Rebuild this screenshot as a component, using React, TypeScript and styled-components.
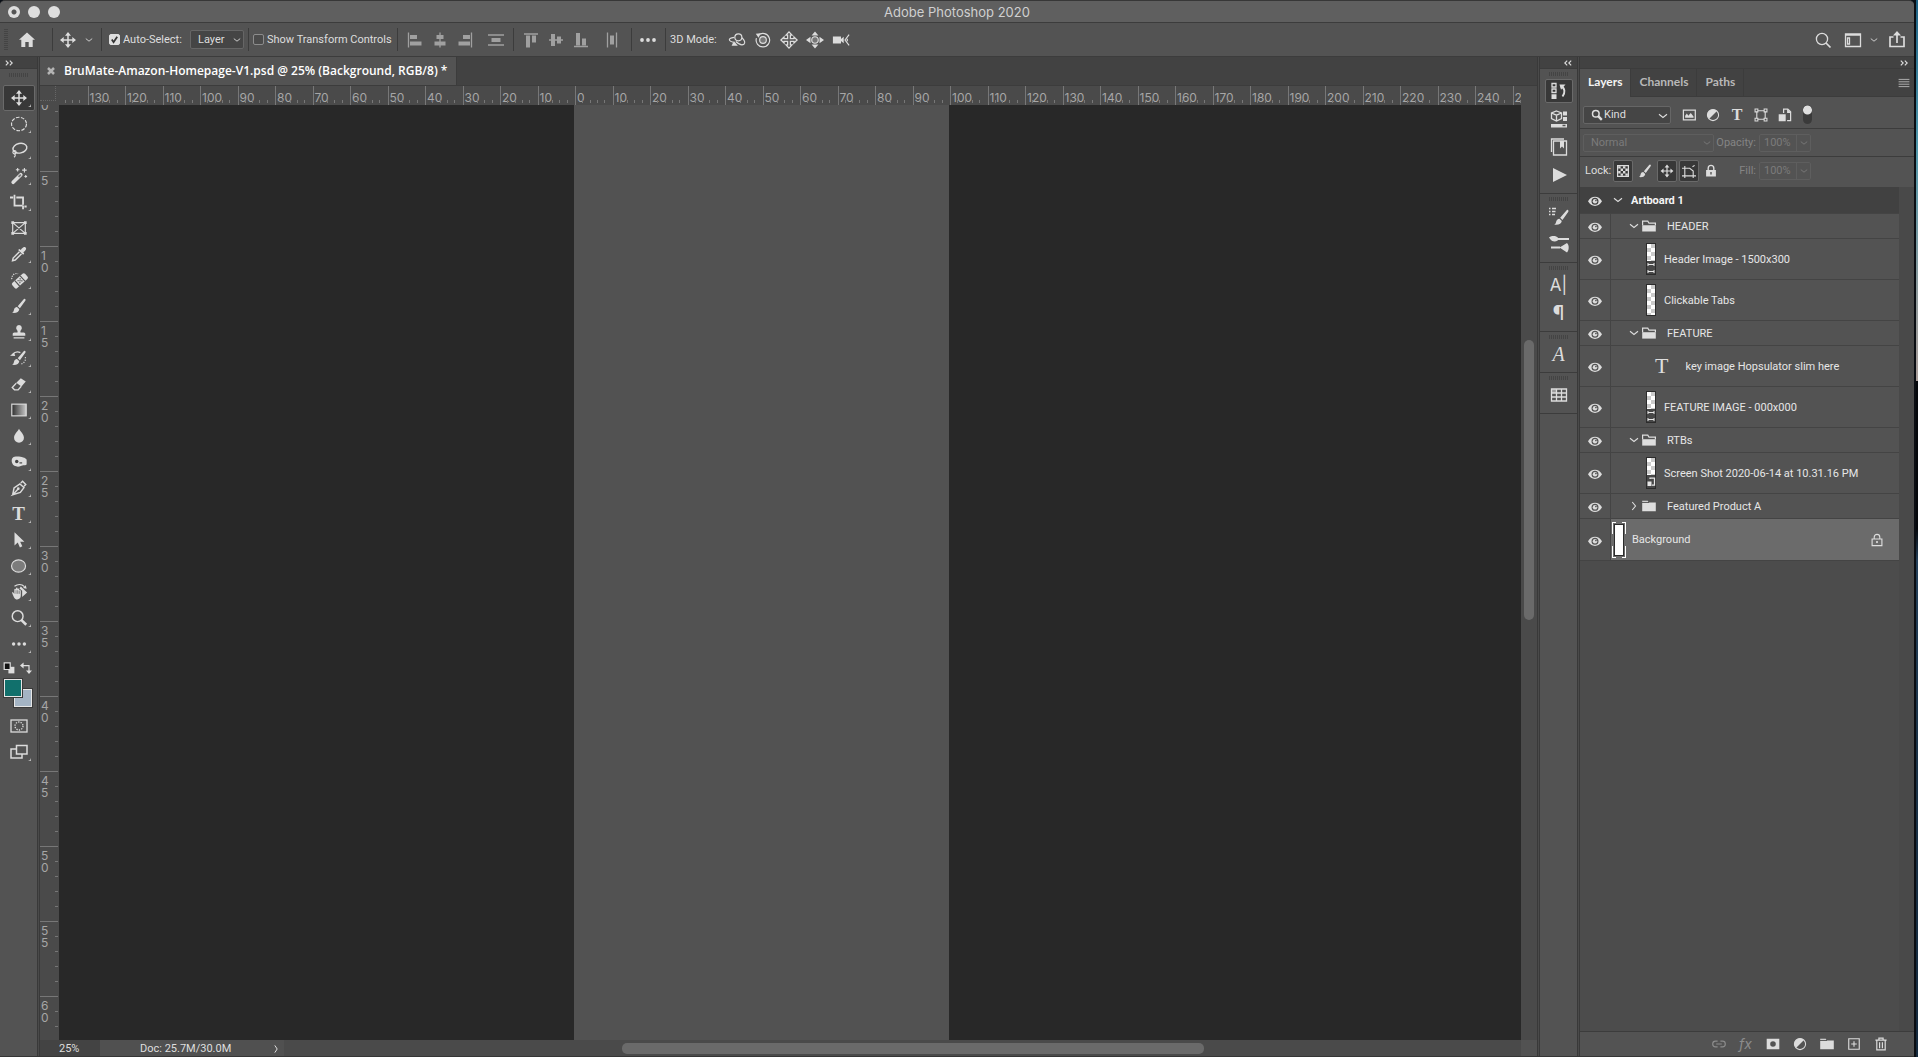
import React from "react";
import styled, { createGlobalStyle, css } from "styled-components";

const c = {
  line: "#3c3c3c",
  panel: "#535353",
  dark: "#424242",
  mid: "#4a4a4a",
  canvas: "#282828",
  text: "#dedede",
  dim: "#7b7b7b",
  icon: "#dcdcdc",
};

const sans = `Roboto, "Liberation Sans", sans-serif`;
const wide = `Inter, Roboto, sans-serif`;
const humanist = `Lato, "Open Sans", sans-serif`;

const Global = createGlobalStyle`
  * { box-sizing: border-box; }
  html, body { margin: 0; height: 100%; background: #10202e; }
  body { font: 11px/14px ${sans}; color: ${c.text}; overflow: hidden; }
  button, input, select { font: inherit; color: inherit; margin: 0; }
  h1, ul { margin: 0; padding: 0; }
`;

/* ---------- shared parts ---------- */

const Desktop = styled.div`
  display: grid;
  grid-template-columns: minmax(0, 1fr) 4px;
  height: 100vh;
  background: #0a0f16;
`;

const Wallpaper = styled.div`
  border-left: 2px solid #0a0d12;
  background: linear-gradient(#1d6285 0%, #4f97ab 14%, #8f9a9c 28%, #a89c98 36%, #05080c 36%, #05080c 50%, #24405a 53%, #1b3348 70%, #14293d 100%);
`;

const Window = styled.div`
  display: flex;
  flex-direction: column;
  min-width: 0;
  height: 100vh;
  border-top: 1px solid #373737;
  border-bottom: 1px solid #353535;
  border-radius: 5px 5px 0 0;
  overflow: hidden;
  background: ${c.panel};
`;

const IconButton = styled.button<{ $w?: number; $h?: number; $active?: boolean }>`
  position: relative;
  display: flex;
  flex: none;
  align-items: center;
  justify-content: center;
  width: ${(p) => p.$w ?? 24}px;
  height: ${(p) => p.$h ?? 24}px;
  padding: 0;
  border: 1px solid ${(p) => (p.$active ? "#6a6a6a" : "transparent")};
  border-radius: 2px;
  background: ${(p) => (p.$active ? "#383838" : "none")};
  color: ${c.icon};
`;

const Svg = styled.svg<{ $size: number }>`
  display: block;
  flex: none;
  width: ${(p) => p.$size}px;
  height: ${(p) => p.$size}px;
  overflow: visible;
`;

const Corner = styled.i`
  position: absolute;
  right: 3px;
  bottom: 3px;
  border: 1px solid currentColor;
  border-width: 2px 1px 1px 2px;
  border-color: transparent #bbb #bbb transparent;
`;

const Glyph = styled.span<{ $size: number; $bold?: boolean; $italic?: boolean; $sans?: boolean }>`
  font-family: ${(p) => (p.$sans ? wide : `"Liberation Serif", serif`)};
  font-size: ${(p) => p.$size}px;
  line-height: 20px;
  font-weight: ${(p) => (p.$bold ? 700 : 400)};
  font-style: ${(p) => (p.$italic ? "italic" : "normal")};
`;

const GripH = styled.div`
  height: 4px;
  width: 20px;
  background: repeating-linear-gradient(90deg, #444 0 1px, transparent 1px 2px);
`;

function Icon({ size = 20, children }: { size?: number; children: React.ReactNode }) {
  return (
    <Svg $size={size} viewBox="0 0 20 20" fill="none" stroke="currentColor" strokeWidth="1.3" aria-hidden="true">
      {children}
    </Svg>
  );
}

const solid = { fill: "currentColor", stroke: "none" };

/* ---------- icons ---------- */

const MoveIcon = ({ size = 20 }: { size?: number }) => (
  <Icon size={size}>
    <path d="M10 4v12M4 10h12" strokeWidth="1.500" />
    <path {...solid} d="M10 2l3 3.700H7zM10 18l3-3.700H7zM2 10l3.700-3v6zM18 10l-3.700-3v6z" />
  </Icon>
);

const Chevron = ({ size = 10 }: { size?: number }) => (
  <Icon size={size}>
    <path strokeWidth="2.200" d="M2 6.500l8 6.500 8-6.500" />
  </Icon>
);

const Brush = () => (
  <>
    <path {...solid} d="M16.800 2.200c.8.6.6 1.300.2 2L11 12.600 8.600 10.300l6.600-7.700c.5-.6 1-.9 1.600-.4z" />
    <path {...solid} d="M7.800 11.200l2.500 2.400c-.2 3-3.500 4.600-8 3.900 1.900-.9 1.800-2.200 2.300-3.800.5-1.500 1.700-2.600 3.200-2.500z" />
  </>
);

const HomeIcon = () => (
  <Icon>
    <path {...solid} d="M10 2.500l8 7.300h-2.300V17h-4v-5H8.300v5h-4V9.800H2z" />
  </Icon>
);

const SearchIcon = () => (
  <Icon>
    <circle cx="9" cy="9" r="5.600" />
    <path d="M13 13l4.500 4.500" strokeWidth="1.700" />
  </Icon>
);

const AlignIcon = ({ kind }: { kind: number }) => (
  <Icon>
    {kind === 0 && <><path d="M3.500 2.500v15" /><path {...solid} d="M5 5h7v4H5zM5 11.500h11.500v4H5z" /></>}
    {kind === 1 && <><path d="M10 2.500v15" /><path {...solid} d="M6.500 5h7v4h-7zM4.500 11.500h11v4h-11z" /></>}
    {kind === 2 && <><path d="M16.500 2.500v15" /><path {...solid} d="M8 5h7v4H8zM3.500 11.500H15v4H3.500z" /></>}
    {kind === 3 && <><path d="M2 5h16M2 15h16" /><path {...solid} d="M5.500 8h9v4h-9z" /></>}
    {kind === 4 && <><path d="M3 4h14" /><path {...solid} d="M5 5.500h4v12H5zM11 5.500h4v7h-4z" /></>}
    {kind === 5 && <><path d="M3 10h14" /><path {...solid} d="M5 4h4v12H5zM11 6.500h4v7h-4z" /></>}
    {kind === 6 && <><path d="M3 16.500h14" /><path {...solid} d="M5 3h4v12.500H5zM11 8.500h4v7h-4z" /></>}
    {kind === 7 && <><path d="M5.500 2.500v15M14.500 2.500v15" /><path {...solid} d="M8 5.500h4v9H8z" /></>}
  </Icon>
);

const DotsIcon = () => (
  <Icon>
    <g {...solid}>
      <circle cx="4" cy="10" r="1.900" /><circle cx="10" cy="10" r="1.900" /><circle cx="16" cy="10" r="1.900" />
    </g>
  </Icon>
);

const modes: { name: string; art: React.ReactNode }[] = [
  {
    name: "Orbit the 3D camera",
    art: <><circle cx="11.500" cy="7" r="3.900" /><path d="M7 7C2.500 7.500.8 9 1.800 10.500c.6 1 2.200 1.500 4 2M15.500 7.500c3 2.500 4 6 2.200 7.200-2 1.300-6-.2-9-3" /><path {...solid} d="M4 16.500h7L6.500 11z" /></>,
  },
  {
    name: "Roll the 3D camera",
    art: <><circle cx="10" cy="10" r="3.700" fill="#777" /><path d="M5 4.500a7.500 7.500 0 1 1-2.300 3.500" /><path {...solid} d="M2 3l5.500-.5L5 7.500z" /></>,
  },
  {
    name: "Pan the 3D camera",
    art: <path strokeWidth="1.400" d="M10 1l3.300 3.500h-1.800v4h4V6.700L19 10l-3.500 3.300v-1.800h-4v4h1.800L10 19l-3.300-3.500h1.800v-4h-4v1.800L1 10l3.500-3.300v1.800h4v-4H6.700z" />,
  },
  {
    name: "Slide the 3D camera",
    art: <><circle cx="10" cy="10" r="3.600" fill="#777" /><path {...solid} d="M10 .5l3.800 4.500H6.200zM10 19.500l3.800-4.500H6.200zM0 10l5-3.500v7zM20 10l-5-3.500v7z" /></>,
  },
  {
    name: "Zoom the 3D camera",
    art: <><path {...solid} d="M1 6h9v3l3-2.500v7L10 11v3H1z" /><path d="M19 4l-4.500 6 4.500 6M17 8.500v3" /></>,
  },
];

const tools: { name: string; art: React.ReactNode; plain?: boolean }[] = [
  { name: "Elliptical Marquee", art: <ellipse cx="10" cy="10" rx="8.300" ry="7.500" strokeDasharray="4 1.600" /> },
  { name: "Lasso", art: <><ellipse cx="11" cy="8" rx="7.800" ry="5.300" transform="rotate(-12 11 8)" strokeWidth="1.600" /><circle cx="5" cy="12.500" r="1.800" /><path d="M5 14.500c1.500 1 .8 2.500-.5 3.500" /></> },
  { name: "Magic Wand", art: <><path d="M3.500 17L12 8.500" strokeWidth="4" strokeLinecap="round" /><path d="M9.500 11L12 8.500" stroke="#777" strokeWidth="2" /><path d="M8.500 1v4M6.500 3h4M16 1v5M13.500 3.500h5M17.500 9v3M16 10.500h3" strokeWidth="1.200" /></> },
  { name: "Crop", art: <path strokeWidth="2" d="M5 2v12h9M0 5h3.500M7 5h7.500v8M14.500 14v4M16 15h2.500" /> },
  { name: "Frame", art: <><path d="M3 4h14v12H3zM3 4l14 12M17 4L3 16" /><path {...solid} d="M1.500 2.500h3v3h-3zM15.500 2.500h3v3h-3zM1.500 14.500h3v3h-3zM15.500 14.500h3v3h-3z" /></>, plain: true },
  { name: "Eyedropper", art: <><path d="M10.500 7.500L3.500 14.500 2.800 17.500l3-.8 7-7" strokeWidth="1.600" /><path {...solid} d="M9 5.500l1.500-1 1.500 1c1.500-2.200 3.500-4.300 5.300-2.800 1.700 1.600-.5 3.800-2.500 5.300l1 1.500-1.200 1.300z" /></> },
  { name: "Spot Healing Brush", art: <><g transform="rotate(-42 11 11)"><rect {...solid} x="1.500" y="7" width="19" height="8" rx="2" /><path d="M7 7v8M15 7v8" stroke="#535353" /><path d="M9 9.500h1.300M12 9.500h1.300M10.500 11h1.300M9 12.500h1.300M12 12.500h1.300" stroke="#444" /></g><path d="M2 9c-.5-4 3-7 7-6" strokeDasharray="1.300 1.300" /></> },
  { name: "Brush", art: <Brush /> },
  { name: "Clone Stamp", art: <path {...solid} d="M10 2.200a3.300 3.300 0 0 1 2.300 5.500c-.7.900-.9 1.500-.6 2.800H15c1.500 0 2 .8 2 2v1.700H3v-1.700c0-1.200.5-2 2-2h3.300c.3-1.300.1-1.900-.6-2.800A3.300 3.300 0 0 1 10 2.200zM4 15.800h12v1.500H4z" /> },
  { name: "History Brush", art: <><Brush /><path d="M3 6c2-2.500 5.500-3.300 8.500-2" /><path {...solid} d="M0 7.500l4.500-3.700 1.300 4z" /><path d="M17 9c.8 3.500-1 6.500-5 8" strokeDasharray="1.300 1.500" /></> },
  { name: "Eraser", art: <><path {...solid} d="M12 3.500l5.500 3.800-4.800 5.500-5.700-4.300z" /><path d="M7 9l-4.500 5 2.500 2.500h4l3.500-4" strokeWidth="1.500" /></> },
  { name: "Gradient", art: <><defs><linearGradient id="ramp"><stop offset="0" stopColor="#2d2d2d" /><stop offset="1" stopColor="#c8c8c8" /></linearGradient></defs><rect x="2" y="3.500" width="16" height="13" fill="url(#ramp)" /></> },
  { name: "Blur", art: <path {...solid} d="M10 2c1.800 3.500 5.500 6 5.500 10a5.500 5.500 0 0 1-11 0C4.500 8 8.200 5.500 10 2z" /> },
  { name: "Sponge", art: <><path {...solid} d="M2.500 11.500C1 7.500 2.500 4 6.500 4c4.500-.5 11 1 12 3.500v5c-.5 2-4.500.5-6.500 2-3 1.500-8.500.5-9.500-3z" /><circle cx="7.500" cy="9.500" r="1.900" fill="#444" stroke="none" /><path d="M10.500 11h3" stroke="#444" /></> },
  { name: "Pen", art: <><path strokeWidth="1.600" d="M3 17.500L4.500 10 11 5.500l4.500 4L11.500 15 3 17.500l6-6.500M12 4.500l2-2 3.500 3.500-2 2.200" /><circle {...solid} cx="9.200" cy="10.800" r="1.500" /></> },
  { name: "Type", art: null },
  { name: "Path Selection", art: <path {...solid} d="M5 1.500v14.700l3.600-3.300 2.400 5.300 2.700-1.200-2.400-5.100h4.700z" /> },
  { name: "Ellipse", art: <ellipse cx="9.500" cy="10" rx="7.800" ry="6.800" fill="#7c7c7c" /> },
  { name: "Hand", art: <><path {...solid} d="M2.200 10.500c1-.6 1.700.2 2.600 1.800V7.200c.2-1.200 1.600-1.200 1.800 0V6c.3-1.200 1.700-1.200 1.900 0v1c.3-1.100 1.700-1 1.800.3v1.200c.4-1 1.700-.8 1.700.4v5.100c0 2.700-1.500 4.300-4 4.300-3 0-3.800-2.500-5.800-7.800z" /><path {...solid} d="M12 4l7 6.500-5.500 5V8.500L10.500 6z" /><path d="M5 3.500C8.500 1 13 1 16 4" /><path {...solid} d="M18.500 6.500l-4-1 3-3z" /><path d="M6.700 8v4M8.600 8v4M10.300 9v3" stroke="#535353" strokeWidth=".7" /></> },
  { name: "Zoom", art: <><circle cx="8.500" cy="8" r="6" strokeWidth="1.600" /><path d="M12.500 12l5.500 5.500" strokeWidth="2.800" /></> },
];

const QuickMaskIcon = () => (
  <Icon><rect x="2" y="4" width="16" height="12" /><circle cx="10" cy="10" r="4" strokeDasharray="1.300 1.200" /></Icon>
);
const ScreenModeIcon = () => (
  <Icon><path d="M7.500 3.500H18v8.500H7.500zM7 7H2v9h11v-3.500" strokeWidth="1.500" /></Icon>
);

const dock: { name: string; art: React.ReactNode }[][] = [
  [
    { name: "History", art: <Icon><path d="M3 2.500h4v3.500H3zM3 8h4v3.500H3z" /><path {...solid} d="M2.500 13.200h5v4.800h-5z" /><path d="M12 5.500c4 1.500 4.500 6 1.500 10" strokeWidth="1.900" /><path {...solid} d="M10.500 3.500h6L12 8.800z" /></Icon> },
    { name: "Properties", art: <Icon><path d="M7.500 2l5 2v5.500l-5 2.500-5-2.500V4zM2.500 4l5 2.200 5-2.200M7.500 6.200V12" /><path {...solid} d="M14 2.500h4v4h-4zM14 8h4v4h-4zM2 15h16v3.500H2z" /><path d="M13.500 16.500h3" stroke="#555" /></Icon> },
    { name: "Libraries", art: <Icon><path d="M4.500 4h13v14h-13zM2.500 15V2H15" /><path {...solid} d="M11 4h4v7.500l-2-2-2 2z" /></Icon> },
    { name: "Actions", art: <Icon><path {...solid} d="M4 3l14 7-14 7z" /></Icon> },
  ],
  [
    { name: "Brushes", art: <Icon><g transform="translate(3 2) scale(.95)"><Brush /></g><path d="M0 2.500h1.500M3 2.500h4M0 5.500h1.500M3 5.500h3.500M0 8.500h1.500M3 8.500h3" /></Icon> },
    { name: "Brush Settings", art: <Icon><path d="M8 5h12M2 13.500h9" strokeWidth="2" /><path {...solid} d="M0 3.500c3-2 7-2 9 .3v2.400C6 8.200 3 7.500 1.500 5.500zM10.500 13.500L18 9c2.300 2 2.300 7 0 9.500z" /></Icon> },
  ],
  [
    { name: "Character", art: <Glyph $size={17} $sans>A|</Glyph> },
    { name: "Paragraph", art: <Glyph $size={20} $sans>¶</Glyph> },
  ],
  [{ name: "Glyphs", art: <Glyph $size={20} $italic>A</Glyph> }],
  [{ name: "Timeline Table", art: <Icon><path {...solid} fill="#999" d="M3 4h5v4H3z" /><path d="M2.500 4h15v12h-15zM2.500 8h15M2.500 12h15M7.500 4v12M12.500 4v12" /></Icon> }],
];

const FolderIcon = ({ closed }: { closed?: boolean }) => (
  <Icon size={16}>
    <path {...solid} d={closed ? "M1.500 3.500h7l1 2h9v11h-17z" : "M1.500 9h17v8h-17z"} />
    {closed ? <path d="M1 5.500h9" stroke="#535353" /> : <path d="M2 9V4h6.500l1.500 2.500h8V9" strokeWidth="1.500" />}
  </Icon>
);

const EyeIcon = () => (
  <Icon size={14}>
    <path {...solid} fillRule="evenodd" d="M0 10.500C2.500 6 6 4 10 4s7.500 2 10 6.500C17.500 15 14 17 10 17s-7.500-2-10-6.500zm5 0a5 5 0 1 0 10 0 5 5 0 0 0-10 0z" />
    <circle {...solid} cx="10" cy="10.500" r="3.200" />
    <circle cx="11.300" cy="9.300" r="1.200" fill="#535353" stroke="none" />
  </Icon>
);

const AdjustIcon = () => (
  <Icon size={14}><circle cx="10" cy="10" r="8" strokeWidth="1.500" /><path {...solid} d="M15.700 4.300A8 8 0 1 0 4.300 15.700z" /></Icon>
);

/* ---------- top bars ---------- */

const TitleBar = styled.header`
  display: grid;
  grid-template-columns: 1fr auto 1fr;
  align-items: center;
  flex: none;
  height: 22px;
  padding-left: 8px;
  border-bottom: 1px solid ${c.line};
  background: #5f5f5f;
`;

const Lights = styled.div`
  display: flex;
  gap: 8px;
`;

const Light = styled.button<{ $dot?: boolean }>`
  width: 12px;
  height: 12px;
  padding: 0;
  border: 0;
  border-radius: 50%;
  background: ${(p) => (p.$dot ? "radial-gradient(circle, #555 2px, #dedede 3px)" : "#dedede")};
`;

const Title = styled.h1`
  margin-right: 8px;
  font: 400 13px/18px ${wide};
  color: #d0d0d0;
`;

const OptionsBar = styled.div`
  display: flex;
  flex: none;
  align-items: center;
  height: 34px;
  border-bottom: 1px solid ${c.line};
`;

const GripV = styled.div`
  width: 4px;
  height: 22px;
  margin-left: 4px;
  background: repeating-linear-gradient(#444 0 1px, transparent 1px 2px);
`;

const OptGroup = styled.div<{ $w?: number; $pad?: number; $muted?: boolean }>`
  display: flex;
  flex: none;
  align-items: center;
  height: 23px;
  width: ${(p) => (p.$w ? `${p.$w}px` : "auto")};
  padding-left: ${(p) => p.$pad ?? 0}px;
  & + & { border-left: 1px solid ${c.line}; }
  ${(p) => p.$muted && css`button { color: #a0a0a0; } button:last-child { margin-left: 6px; }`}
`;

const Check = styled.label`
  display: flex;
  align-items: center;
  gap: 3px;
  white-space: nowrap;
  input {
    appearance: none;
    width: 11px;
    height: 11px;
    border: 1px solid #8c8c8c;
    border-radius: 2px;
    background: #4b4b4b;
  }
  input:checked {
    border-color: #dedede;
    background: #dedede url("data:image/svg+xml,%3Csvg xmlns='http://www.w3.org/2000/svg' viewBox='0 0 10 10'%3E%3Cpath d='M2 5l2 3 4-6' fill='none' stroke='%23333' stroke-width='2'/%3E%3C/svg%3E");
  }
`;

const SelectBox = styled.span<{ $w: number; $h: number; $pad: number; $dim?: boolean }>`
  position: relative;
  display: inline-block;
  flex: none;
  width: ${(p) => p.$w}px;
  height: ${(p) => p.$h}px;
  color: ${(p) => (p.$dim ? c.dim : c.text)};
  select {
    appearance: none;
    width: 100%;
    height: 100%;
    padding: 0 0 0 ${(p) => p.$pad}px;
    border: 1px solid ${(p) => (p.$dim ? "#5e5e5e" : "#666")};
    border-radius: 2px;
    background: ${(p) => (p.$dim ? "none" : "#454545")};
    opacity: 1;
    color: inherit;
  }
  > svg {
    position: absolute;
    right: 3px;
    top: calc(50% - 4px);
    pointer-events: none;
  }
`;

const SelectRight = styled.div`
  display: flex;
  margin-left: auto;
  padding-right: 4px;
`;

const ModeLabel = styled.span`
  width: 54px;
  white-space: nowrap;
`;

const RightTools = styled.div`
  display: flex;
  margin-left: auto;
  align-items: center;
`;

/* ---------- main area ---------- */

const Main = styled.div`
  display: grid;
  flex: 1;
  min-height: 0;
  grid-template: minmax(0, 1fr) / 37px 3px minmax(0, 1fr) 3px 37px 3px 334px;
`;

const Divider = styled.div`
  border: 1px solid #393939;
  border-width: 0 1px;
  background: ${c.mid};
`;

const Strip = styled.div<{ $end?: boolean; $pad: number }>`
  display: flex;
  align-items: center;
  justify-content: ${(p) => (p.$end ? "flex-end" : "flex-start")};
  height: 12px;
  flex: none;
  padding: 0 ${(p) => p.$pad}px;
  border-bottom: 1px solid ${c.line};
  background: ${c.dark};
`;

const Collapse = ({ left }: { left?: boolean }) => (
  <Icon size={8}>
    <path strokeWidth="2.800" d={left ? "M8 4L2 10l6 6M18 4l-6 6 6 6" : "M2 4l6 6-6 6M12 4l6 6-6 6"} />
  </Icon>
);

const Toolbar = styled.nav`
  display: flex;
  flex-direction: column;
  align-items: center;
  min-height: 0;
  > ${Strip} { align-self: stretch; }
  > ${GripH} { margin: 4px 0 8px; }
`;

const ToolButton = styled(IconButton)`
  width: 32px;
  height: 26px;
`;

const MiniRow = styled.div`
  display: flex;
  align-self: stretch;
  align-items: center;
  justify-content: space-between;
  height: 21px;
  padding: 0 5px 0 3px;
`;

const Swatches = styled.div`
  display: grid;
  align-self: flex-start;
  grid-template: repeat(3, 10px) / repeat(3, 10px);
  margin: 0 0 5px 3px;
`;

const Swatch = styled.button<{ $color: string; $front?: boolean }>`
  grid-area: ${(p) => (p.$front ? "1 / 1 / 3 / 3" : "2 / 2 / 4 / 4")};
  z-index: ${(p) => (p.$front ? 1 : 0)};
  padding: 0;
  border: 1px solid #3a3a3a;
  box-shadow: inset 0 0 0 1px #e6e6e6;
  background: ${(p) => p.$color};
`;

const Document = styled.main`
  display: flex;
  flex-direction: column;
  min-width: 0;
  min-height: 0;
`;

const TabStrip = styled.div`
  display: flex;
  height: 29px;
  flex: none;
  border-bottom: 1px solid ${c.line};
  background: ${c.dark};
`;

const DocTab = styled.div`
  display: flex;
  align-items: center;
  gap: 8px;
  padding: 0 9px 0 6px;
  border-right: 1px solid ${c.line};
  background: ${c.panel};
  font: 600 12px/16px "Open Sans", ${humanist};
  color: #fff;
  white-space: nowrap;
`;

const RulerRow = styled.div`
  display: grid;
  flex: none;
  grid-template-columns: 19px minmax(0, 1fr) 16px;
  height: 19px;
  background: ${c.mid};
`;

const RulerCorner = styled.div`
  border: 1px dotted #666;
  border-width: 0 1px 1px 0;
  margin: 0 3px 4px 0;
`;

const TopRuler = styled.div`
  overflow: hidden;
`;

const TopTrack = styled.div`
  display: flex;
  width: max-content;
  height: 19px;
  margin-left: -9px;
`;

const TopPair = styled.div`
  display: grid;
  grid-template-columns: 1fr 1fr;
  width: 75px;
`;

const TopCell = styled.div`
  display: grid;
  grid-template: 1fr / repeat(5, minmax(0, 1fr));
  align-items: end;
  min-width: 0;
  border-left: 1px solid #777;
  color: #a6a6a6;
  font: 12px/14px ${wide};
  b { grid-area: 1 / 1 / 2 / 6; align-self: center; padding: 4px 0 0 1px; font-weight: 400; }
  i { grid-row: 1; height: 3px; margin-bottom: 2px; border-right: 1px solid #777; }
  i:nth-of-type(1) { grid-column: 1; }
  i:nth-of-type(2) { grid-column: 2; }
  i:nth-of-type(3) { grid-column: 3; }
  i:nth-of-type(4) { grid-column: 4; }
`;

const Body = styled.div`
  display: grid;
  flex: 1;
  min-height: 0;
  grid-template: minmax(0, 1fr) / 19px minmax(0, 1fr) 16px;
  background: ${c.mid};
`;

const SideRuler = styled.div`
  overflow: hidden;
`;

const SideTrack = styled.div`
  margin-top: -9px;
`;

const SideCell = styled.div`
  display: grid;
  grid-template: repeat(5, 15px) / 15px 3px;
  height: 75px;
  border-top: 1px solid #777;
  margin-right: 1px;
  color: #a6a6a6;
  font: 12px/12px ${wide};
  b { grid-area: 1 / 1 / 6 / 2; display: flex; flex-direction: column; padding: 3px 0 0 1px; font-weight: 400; }
  i { grid-column: 2; border-bottom: 1px solid #777; }
  i:last-child { border: 0; }
`;

const Canvas = styled.div`
  overflow: hidden;
  padding-left: 515px;
  background: ${c.canvas};
`;

const Artboard = styled.div`
  width: 375px;
  height: 100%;
  background: #525252;
`;

const ScrollV = styled.div`
  display: grid;
  grid-template-rows: 235fr 280fr 420fr;
  padding: 0 3px;
`;

const ScrollH = styled.div`
  display: grid;
  grid-template-columns: 338fr 582fr 317fr;
  padding: 3px 0;
`;

const Thumb = styled.div`
  grid-area: 2 / 1;
  border-radius: 5px;
  background: #6a6a6a;
  ${ScrollH} & { grid-area: 1 / 2; }
`;

const Status = styled.footer`
  display: grid;
  flex: none;
  grid-template-columns: 60px 184px minmax(0, 1fr) 16px;
  height: 16px;
  background: ${c.mid};
  line-height: 16px;
`;

const Zoom = styled.input`
  width: 60px;
  height: 16px;
  padding: 1px 0 0 19px;
  border: 0;
  background: #434343;
`;

const DocInfo = styled.button`
  display: flex;
  align-items: center;
  justify-content: space-between;
  padding: 1px 4px 0 40px;
  border: 0;
  background: #505050;
`;

const StatusCorner = styled.div`
  background: #525252;
`;

/* ---------- dock ---------- */

const Column = styled.aside`
  display: flex;
  flex-direction: column;
  min-width: 0;
  min-height: 0;
`;

const DockGroup = styled.div`
  display: flex;
  flex-direction: column;
  align-items: center;
  padding-bottom: 4px;
  border-bottom: 1px solid ${c.line};
  > ${GripH} { margin: 3px 0 1px; }
`;

const DockSlot = styled.div`
  display: flex;
  align-items: center;
  height: 28px;
`;

/* ---------- layers panel ---------- */

const PanelTabs = styled.div`
  display: flex;
  height: 28px;
  flex: none;
  border-bottom: 1px solid ${c.line};
  background: ${c.dark};
`;

const PanelTab = styled.button<{ $on?: boolean }>`
  padding: 0 8px 2px;
  border: 0;
  border-right: 1px solid ${c.line};
  margin-bottom: ${(p) => (p.$on ? -1 : 0)}px;
  background: ${(p) => (p.$on ? c.panel : "none")};
  font: 700 12px/16px ${humanist};
  color: ${(p) => (p.$on ? "#f4f4f4" : "#b8b8b8")};
`;

const MenuButton = styled.button`
  display: flex;
  margin-left: auto;
  align-items: center;
  padding: 0 4px;
  border: 0;
  background: none;
  color: #b8b8b8;
`;

const Row = styled.div<{ $h: number; $gap?: number; $plain?: boolean; $top?: number; $bottom?: number }>`
  display: flex;
  flex: none;
  align-items: center;
  height: ${(p) => p.$h}px;
  padding: ${(p) => p.$top ?? 0}px 3px ${(p) => p.$bottom ?? 0}px;
  gap: ${(p) => p.$gap ?? 0}px;
  border-bottom: ${(p) => (p.$plain ? 0 : 1)}px solid ${c.line};
`;

const KindBox = styled.div`
  position: relative;
  display: flex;
  margin-right: 6px;
  > svg { position: absolute; left: 8px; top: 3px; z-index: 1; }
`;

const Switch = styled.label`
  margin-left: 6px;
  input {
    display: block;
    appearance: none;
    width: 9px;
    height: 19px;
    margin: 0;
    border-radius: 5px;
    background: radial-gradient(circle at 50% 5px, #dedede 4px, #3a3a3a 5px);
  }
`;

const Field = styled.label`
  display: flex;
  align-items: center;
  justify-content: flex-end;
  margin-left: auto;
  margin-right: 100px;
  gap: 3px;
  color: #858585;
`;

const NumberBox = styled.span`
  display: flex;
  flex: none;
  width: 52px;
  height: 18px;
  border: 1px solid #5e5e5e;
  border-radius: 2px;
  color: ${c.dim};
  input { width: 36px; padding: 0 0 0 4px; border: 0; background: none; color: inherit; }
  button { display: flex; flex: 1; align-items: center; justify-content: center; padding: 0; border: 0; border-left: 1px solid #5e5e5e; background: none; }
`;

const LockLabel = styled.span`
  width: 28px;
  padding-left: 2px;
`;

const LayerArea = styled.div`
  display: grid;
  flex: 1;
  min-height: 0;
  grid-template-columns: minmax(0, 1fr) 15px;
  background: #4c4c4c;
`;

const Gutter = styled.div`
  background: #494949;
`;

const List = styled.ul`
  list-style: none;
`;

const LayerRow = styled.li<{ $h: number; $head?: boolean; $selected?: boolean }>`
  display: grid;
  grid-template-columns: 30px minmax(0, 1fr);
  height: ${(p) => p.$h}px;
  border-bottom: 1px solid #444;
  background: ${(p) => (p.$head ? "#414141" : c.panel)};
  > button { width: 30px; height: 100%; padding-top: 2px; }
  > div { border-left: 1px solid ${(p) => (p.$head ? "transparent" : "#444")}; background: ${(p) => (p.$selected ? "#6b6b6b" : "none")}; }
`;

const LayerBody = styled.div<{ $indent: number }>`
  display: flex;
  align-items: center;
  padding-left: ${(p) => p.$indent}px;
  padding-right: 15px;
`;

const LayerName = styled.span<{ $gap: number; $bold?: boolean }>`
  flex: 1;
  margin-left: ${(p) => p.$gap}px;
  padding-top: 1px;
  font-weight: ${(p) => (p.$bold ? 700 : 400)};
  color: ${(p) => (p.$bold ? "#f4f4f4" : "#e6e6e6")};
  white-space: nowrap;
`;

const Twisty = styled.button<{ $closed?: boolean }>`
  display: flex;
  width: 14px;
  padding: 0;
  justify-content: center;
  border: 0;
  background: none;
  transform: ${(p) => (p.$closed ? "rotate(-90deg)" : "none")};
`;

const Thumbnail = styled.span`
  display: flex;
  flex-direction: column;
  width: 10px;
  height: 32px;
  border: 1px solid #2c2c2c;
  background: #474747;
  color: #e6e6e6;
`;

const Checker = styled.span`
  flex: 1;
  background: conic-gradient(#cbcbcb 25%, #fff 0 50%, #cbcbcb 0 75%, #fff 0) 0 0 / 8px 8px;
`;

const Badge = styled.span`
  display: flex;
  align-items: center;
  justify-content: center;
  height: 13px;
`;

const Selected = styled.span`
  display: flex;
  padding: 2px;
  background:
    linear-gradient(#fff, #fff) 0 0 / 4px 1px, linear-gradient(#fff, #fff) 100% 0 / 4px 1px,
    linear-gradient(#fff, #fff) 0 100% / 4px 1px, linear-gradient(#fff, #fff) 100% 100% / 4px 1px,
    linear-gradient(#fff, #fff) 0 0 / 1px 12px, linear-gradient(#fff, #fff) 100% 0 / 1px 12px,
    linear-gradient(#fff, #fff) 0 100% / 1px 12px, linear-gradient(#fff, #fff) 100% 100% / 1px 12px;
  background-repeat: no-repeat;
  ${Thumbnail} { background: #fff; }
`;

const PanelFooter = styled.div`
  display: flex;
  flex: none;
  align-items: center;
  justify-content: flex-end;
  height: 25px;
  padding-right: 20px;
  border-top: 1px solid ${c.line};
  button:nth-child(-n + 2) { color: #8c8c8c; }
`;

type LayerKind = "artboard" | "group" | "closed" | "shape" | "pixel" | "text" | "smart" | "background";

const layers: { name: string; kind: LayerKind }[] = [
  { name: "Artboard 1", kind: "artboard" },
  { name: "HEADER", kind: "group" },
  { name: "Header Image - 1500x300", kind: "shape" },
  { name: "Clickable Tabs", kind: "pixel" },
  { name: "FEATURE", kind: "group" },
  { name: "key image Hopsulator slim here", kind: "text" },
  { name: "FEATURE IMAGE - 000x000", kind: "shape" },
  { name: "RTBs", kind: "group" },
  { name: "Screen Shot 2020-06-14 at 10.31.16 PM", kind: "smart" },
  { name: "Featured Product A", kind: "closed" },
  { name: "Background", kind: "background" },
];

const LockIcon = ({ open }: { open?: boolean }) => (
  <Icon size={14}>
    {open ? (
      <><path d="M3 8.500h14v9.500H3zM6 8.500V6a4 4 0 0 1 8 0v2.500" strokeWidth="1.600" /><circle {...solid} cx="10" cy="13" r="1.500" /></>
    ) : (
      <><path {...solid} d="M3 8.500h14v9.500H3z" /><path d="M6 9V6a4 4 0 0 1 8 0v3" strokeWidth="2" /><path d="M10 11.500v3.500" stroke="#535353" strokeWidth="2" /></>
    )}
  </Icon>
);

function Layer({ name, kind }: { name: string; kind: LayerKind }) {
  const isGroup = kind === "group" || kind === "closed";
  const height = kind === "artboard" ? 27 : isGroup ? 25 : kind === "background" ? 42 : 41;
  const indent = kind === "artboard" ? 0 : isGroup ? 16 : kind === "text" ? 44 : kind === "background" ? 1 : 35;
  const gap = kind === "artboard" ? 6 : isGroup ? 10 : kind === "text" ? 17 : kind === "background" ? 6 : 8;
  return (
    <LayerRow $h={height} $head={kind === "artboard"} $selected={kind === "background"}>
      <IconButton aria-label={`Visibility of ${name}`}><EyeIcon /></IconButton>
      <LayerBody $indent={indent}>
        {(isGroup || kind === "artboard") && (
          <Twisty $closed={kind === "closed"} aria-label={`Toggle ${name}`}><Chevron /></Twisty>
        )}
        {isGroup && <FolderIcon closed={kind === "closed"} />}
        {kind === "text" && <Glyph $size={22}>T</Glyph>}
        {kind === "pixel" && <Thumbnail><Checker /></Thumbnail>}
        {kind === "shape" && (
          <Thumbnail><Checker /><Badge><Icon size={10}><path strokeWidth="2" d="M4 3h12M4 17h12M4 0v6M16 0v6M4 14v6M16 14v6" /></Icon></Badge></Thumbnail>
        )}
        {kind === "smart" && (
          <Thumbnail><Checker /><Badge><Icon size={10}><path strokeWidth="2.500" d="M8 4V2h9v14h-5" /><path {...solid} d="M3 9h8v9H3z" /></Icon></Badge></Thumbnail>
        )}
        {kind === "background" && <Selected><Thumbnail /></Selected>}
        <LayerName $gap={gap} $bold={kind === "artboard"}>{name}</LayerName>
        {kind === "background" && <LockIcon open />}
      </LayerBody>
    </LayerRow>
  );
}

function LayersPanel() {
  return (
    <Column>
      <Strip $end $pad={6}><Collapse /></Strip>
      <PanelTabs>
        <PanelTab $on>Layers</PanelTab>
        <PanelTab>Channels</PanelTab>
        <PanelTab>Paths</PanelTab>
        <MenuButton aria-label="Panel menu"><Icon size={12}><path strokeWidth="1.500" d="M1 4h18M1 8h18M1 12h18M1 16h18" /></Icon></MenuButton>
      </PanelTabs>
      <Row $h={32} $top={4}>
        <KindBox>
          <Icon size={12}><circle cx="8" cy="8" r="5.500" strokeWidth="2.500" /><path d="M12 12l6 6" strokeWidth="4" /></Icon>
          <SelectBox $w={88} $h={18} $pad={20}><select aria-label="Filter type"><option>Kind</option></select><Chevron /></SelectBox>
        </KindBox>
        <IconButton aria-label="Pixel filter"><Icon size={14}><path d="M2 3h17v14H2z" strokeWidth="1.800" /><path {...solid} d="M4.500 14V11l2.500-3 2 3 3.500-4 4 5v2z" /></Icon></IconButton>
        <IconButton aria-label="Adjustment filter"><AdjustIcon /></IconButton>
        <IconButton aria-label="Type filter"><Glyph $size={16} $bold>T</Glyph></IconButton>
        <IconButton aria-label="Shape filter"><Icon size={14}><path strokeWidth="1.600" d="M4 4h12v12H4z" /><path strokeWidth="1.500" fill="#535353" d="M1.500 1.500h4v4h-4zM14.500 1.500h4v4h-4zM1.500 14.500h4v4h-4zM14.500 14.500h4v4h-4z" /></Icon></IconButton>
        <IconButton aria-label="Smart object filter"><Icon size={14}><path strokeWidth="1.800" d="M8 7V1.500h6l4 4V18h-5" /><path {...solid} d="M1 9h10v10H1zM13 1v6h6z" /></Icon></IconButton>
        <Switch><input type="checkbox" aria-label="Toggle filtering" /></Switch>
      </Row>
      <Row $h={28}>
        <SelectBox $w={131} $h={18} $pad={7} $dim><select aria-label="Blend mode"><option>Normal</option></select><Chevron size={8} /></SelectBox>
        <Field>Opacity:<NumberBox><input aria-label="Opacity" defaultValue="100%" /><button aria-label="Opacity slider"><Chevron size={8} /></button></NumberBox></Field>
      </Row>
      <Row $h={30} $plain $gap={2} $bottom={2}>
        <LockLabel>Lock:</LockLabel>
        <IconButton $w={20} $h={22} $active aria-label="Lock transparent pixels">
          <Icon size={12}><path d="M1 1h18v18H1z" strokeWidth="2" /><path {...solid} d="M2 2h4v4H2zM10 2h4v4h-4zM6 6h4v4H6zM14 6h4v4h-4zM2 10h4v4H2zM10 10h4v4h-4zM6 14h4v4H6zM14 14h4v4h-4z" /></Icon>
        </IconButton>
        <IconButton $w={20} $h={22} aria-label="Lock image pixels"><Icon size={16}><Brush /></Icon></IconButton>
        <IconButton $w={20} $h={22} $active aria-label="Lock position"><MoveIcon size={16} /></IconButton>
        <IconButton $w={20} $h={22} $active aria-label="Lock artboard nesting"><Icon size={14}><path strokeWidth="1.600" d="M4 3v17M0 6h11l5 4v7H0M16 17v3M16 17h4M15 4l3-2" /></Icon></IconButton>
        <IconButton $w={20} $h={22} aria-label="Lock all"><LockIcon /></IconButton>
        <Field>Fill:<NumberBox><input aria-label="Fill" defaultValue="100%" /><button aria-label="Fill slider"><Chevron size={8} /></button></NumberBox></Field>
      </Row>
      <LayerArea>
        <List>{layers.map((l) => <Layer key={l.name} {...l} />)}</List>
        <Gutter />
      </LayerArea>
      <PanelFooter>
        <IconButton $w={27} aria-label="Link layers"><Icon size={14}><path strokeWidth="1.700" d="M8 6H5a4 4 0 0 0 0 8h3M12 6h3a4 4 0 0 1 0 8h-3M6 10h8" /></Icon></IconButton>
        <IconButton $w={27} aria-label="Layer style"><Glyph $size={14} $italic $sans>fx</Glyph></IconButton>
        <IconButton $w={27} aria-label="Add mask"><Icon size={14}><path {...solid} fillRule="evenodd" d="M1 2.500h18v15H1zM10 6a4 4 0 1 0 0 8 4 4 0 0 0 0-8z" /></Icon></IconButton>
        <IconButton $w={27} aria-label="New adjustment layer"><AdjustIcon /></IconButton>
        <IconButton $w={27} aria-label="New group"><FolderIcon closed /></IconButton>
        <IconButton $w={27} aria-label="New layer"><Icon size={14}><path strokeWidth="1.600" d="M2.500 2.500h15v15h-15zM10 6v8M6 10h8" /></Icon></IconButton>
        <IconButton $w={27} aria-label="Delete layer"><Icon size={14}><path strokeWidth="1.700" d="M2 4.500h16M7 4V1.500h6V4M4 5v13.500h12V5M8 7.500v8.500M12 7.500v8.500" /></Icon></IconButton>
      </PanelFooter>
    </Column>
  );
}

function ToolPanel() {
  return (
    <Toolbar aria-label="Tools">
      <Strip $pad={5}><Collapse /></Strip>
      <GripH />
      <ToolButton $active aria-label="Move"><MoveIcon /><Corner /></ToolButton>
      {tools.map((t) => (
        <ToolButton key={t.name} aria-label={t.name}>
          {t.art ? <Icon size={18}>{t.art}</Icon> : <Glyph $size={19} $bold>T</Glyph>}
          {!t.plain && <Corner />}
        </ToolButton>
      ))}
      <ToolButton aria-label="Edit toolbar"><Icon size={18}><DotsIcon /></Icon><Corner /></ToolButton>
      <MiniRow>
        <Icon size={12}><path {...solid} d="M9 8h10v11H9z" /><path d="M2 1.500h10v11H2z" fill="#111" strokeWidth="2" /></Icon>
        <Icon size={12}><path strokeWidth="2" d="M3 6h12v11" /><path {...solid} d="M0 6l6-5v10zM15 20l-5-6h10z" /></Icon>
      </MiniRow>
      <Swatches>
        <Swatch $front $color="#11706c" aria-label="Foreground color" />
        <Swatch $color="#a4b4c4" aria-label="Background color" />
      </Swatches>
      <ToolButton aria-label="Quick mask"><QuickMaskIcon /></ToolButton>
      <ToolButton aria-label="Screen mode"><ScreenModeIcon /><Corner /></ToolButton>
    </Toolbar>
  );
}

const topMarks = Array.from({ length: 20 }, (_, i) => [-140 + i * 20, -130 + i * 20]);
const sideMarks = Array.from({ length: 13 }, (_, i) => i * 5);
const minor = [0, 1, 2, 3];

function DocumentArea() {
  return (
    <Document>
      <TabStrip>
        <DocTab>
          <Icon size={10}><path strokeWidth="5" stroke="#b4b4b4" d="M4 4l12 12M16 4L4 16" /></Icon>
          <span>BruMate-Amazon-Homepage-V1.psd @ 25% (Background, RGB/8) *</span>
        </DocTab>
      </TabStrip>
      <RulerRow>
        <RulerCorner />
        <TopRuler>
          <TopTrack>
            {topMarks.map((pair) => (
              <TopPair key={pair[0]}>
                {pair.map((n) => (
                  <TopCell key={n}>{n > -140 && <b>{Math.abs(n)}</b>}{minor.map((m) => <i key={m} />)}</TopCell>
                ))}
              </TopPair>
            ))}
          </TopTrack>
        </TopRuler>
      </RulerRow>
      <Body>
        <SideRuler>
          <SideTrack>
            {sideMarks.map((n) => (
              <SideCell key={n}>
                <b>{String(n).split("").map((d, i) => <span key={i}>{d}</span>)}</b>
                {minor.map((m) => <i key={m} />)}
                <i />
              </SideCell>
            ))}
          </SideTrack>
        </SideRuler>
        <Canvas><Artboard /></Canvas>
        <ScrollV><Thumb /></ScrollV>
      </Body>
      <Status>
        <Zoom aria-label="Zoom level" defaultValue="25%" />
        <DocInfo>Doc: 25.7M/30.0M<Icon size={8}><path strokeWidth="2.500" d="M7 1l6 9-6 9" /></Icon></DocInfo>
        <ScrollH><Thumb /></ScrollH>
        <StatusCorner />
      </Status>
    </Document>
  );
}

export default function App() {
  return (
    <Desktop>
      <Global />
      <Window>
        <TitleBar>
          <Lights>
            <Light $dot aria-label="Close" />
            <Light aria-label="Minimize" />
            <Light aria-label="Zoom" />
          </Lights>
          <Title>Adobe Photoshop 2020</Title>
        </TitleBar>
        <OptionsBar>
          <OptGroup $w={52}>
            <GripV />
            <IconButton $w={38} aria-label="Home"><HomeIcon /></IconButton>
          </OptGroup>
          <OptGroup $w={49}>
            <IconButton $w={30} aria-label="Move tool"><MoveIcon /></IconButton>
            <IconButton $w={12} aria-label="Tool presets"><Chevron size={8} /></IconButton>
          </OptGroup>
          <OptGroup $w={147} $pad={7}>
            <Check><input type="checkbox" defaultChecked />Auto-Select:</Check>
            <SelectRight>
              <SelectBox $w={54} $h={19} $pad={7}><select aria-label="Auto-select target"><option>Layer</option></select><Chevron size={8} /></SelectBox>
            </SelectRight>
          </OptGroup>
          <OptGroup $w={149} $pad={4}>
            <Check><input type="checkbox" />Show Transform Controls</Check>
          </OptGroup>
          <OptGroup $w={116} $pad={4} $muted>
            {[0, 1, 2, 3].map((k) => <IconButton key={k} $w={25} aria-label={`Align ${k + 1}`}><AlignIcon kind={k} /></IconButton>)}
          </OptGroup>
          <OptGroup $w={118} $pad={4} $muted>
            {[4, 5, 6, 7].map((k) => <IconButton key={k} $w={25} aria-label={`Align ${k + 1}`}><AlignIcon kind={k} /></IconButton>)}
          </OptGroup>
          <OptGroup $w={34} $pad={4}>
            <IconButton aria-label="More align options"><DotsIcon /></IconButton>
          </OptGroup>
          <OptGroup $pad={4}>
            <ModeLabel>3D Mode:</ModeLabel>
            {modes.map((m) => <IconButton key={m.name} $w={26} aria-label={m.name}><Icon size={18}>{m.art}</Icon></IconButton>)}
          </OptGroup>
          <RightTools>
            <IconButton $w={30} aria-label="Search"><SearchIcon /></IconButton>
            <IconButton $w={30} aria-label="Workspace"><Icon><path d="M2.500 4h15v12.500h-15zM2.500 5h15M4.500 8h2v6h-2z" /></Icon></IconButton>
            <IconButton $w={12} aria-label="Workspace list"><Chevron size={8} /></IconButton>
            <IconButton $w={34} aria-label="Share"><Icon><path strokeWidth="1.700" d="M6.500 7H3v9.500h14V7h-3.500M10 13V4" /><path {...solid} d="M10 1l4 4.500H6z" /></Icon></IconButton>
          </RightTools>
        </OptionsBar>
        <Main>
          <ToolPanel />
          <Divider />
          <DocumentArea />
          <Divider />
          <Column>
            <Strip $end $pad={5}><Collapse left /></Strip>
            {dock.map((group, g) => (
              <DockGroup key={g}>
                <GripH />
                {group.map((d) => (
                  <DockSlot key={d.name}>
                    <IconButton $w={28} $active={d.name === "History"} aria-label={d.name}>{d.art}</IconButton>
                  </DockSlot>
                ))}
              </DockGroup>
            ))}
          </Column>
          <Divider />
          <LayersPanel />
        </Main>
      </Window>
      <Wallpaper />
    </Desktop>
  );
}
